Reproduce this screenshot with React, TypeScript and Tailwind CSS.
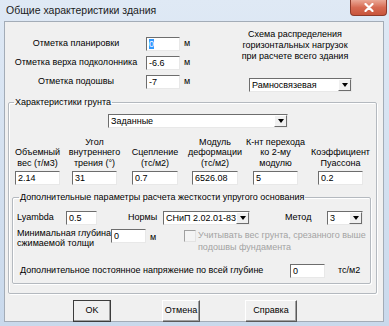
import React from "react";

function Field({ w, value, sel }: { w: string; value: string; sel?: boolean }) {
  return (
    <div
      className={`${w} h-[14px] shrink-0 bg-white border border-t-[#6d6d6d] border-l-[#6d6d6d] border-r-[#e8e8e8] border-b-[#e8e8e8] pl-[2px] leading-[12px] whitespace-nowrap overflow-hidden`}
    >
      {sel ? <span className="bg-[#3399ff] text-white">{value}</span> : value}
    </div>
  );
}

function Combo({ w, value }: { w: string; value: string }) {
  return (
    <div
      className={`${w} h-[14px] shrink-0 flex bg-white border border-t-[#6d6d6d] border-l-[#6d6d6d] border-r-[#e8e8e8] border-b-[#e8e8e8]`}
    >
      <div className="flex-1 pl-[2px] leading-[12px] whitespace-nowrap overflow-hidden">{value}</div>
      <div className="w-[13px] h-[12px] shrink-0 bg-[#f0f0f0] border border-t-white border-l-white border-r-[#6d6d6d] border-b-[#6d6d6d] flex items-center justify-center">
        <div className="w-0 h-0 border-l-[3px] border-r-[3px] border-t-[4px] border-l-transparent border-r-transparent border-t-black" />
      </div>
    </div>
  );
}

function Btn({ w, label, def }: { w: string; label: string; def?: boolean }) {
  return (
    <div
      className={`${w} h-[22px] shrink-0 flex items-center justify-center bg-[#f0f0f0] border ${
        def ? "border-[#3c3c3c]" : "border-t-white border-l-white border-r-[#5a5a5a] border-b-[#5a5a5a]"
      } shadow-[inset_-1px_-1px_0_#a0a0a0]`}
    >
      {label}
    </div>
  );
}

export default function App() {
  const cols = [
    { w: "w-[57px]", iw: "w-[45px]", lines: ["Объемный", "вес (т/м3)"], v: "2.14" },
    { w: "w-[57px]", iw: "w-[45px]", lines: ["Угол", "внутреннего", "трения (°)"], v: "31" },
    { w: "w-[64px]", iw: "w-[46px]", lines: ["Сцепление", "(тс/м2)"], v: "0.7" },
    { w: "w-[56px]", iw: "w-[46px]", lines: ["Модуль", "деформации", "(тс/м2)"], v: "6526.08" },
    { w: "w-[65px]", iw: "w-[45px]", lines: ["К-нт перехода", "ко 2-му", "модулю"], v: "5" },
    { w: "w-[65px]", iw: "w-[45px]", lines: ["Коэффициент", "Пуассона"], v: "0.2" },
  ];

  return (
    <div
      className="w-[389px] h-[326px] overflow-hidden bg-gradient-to-b from-[#dfe9f5] to-[#c9d9ec] text-[9px] text-black"
      style={{ fontFamily: '"Liberation Sans", Arial, sans-serif' }}
    >
      {/* title bar */}
      <div className="h-[21px] flex items-start">
        <div className="pl-[6px] pt-[3px] text-[10.5px] text-[#1b1b1b] flex-1">Общие характеристики здания</div>
        <div className="mr-[2px] w-[37px] h-[16px] rounded-b-[4px] border border-t-0 border-[#8d3b2b] bg-gradient-to-b from-[#eaa896] via-[#d66a52] to-[#c8553c] flex items-center justify-center">
          <svg width="10" height="9" viewBox="0 0 10 9">
            <path d="M1.5 1 L8.5 8 M8.5 1 L1.5 8" stroke="#fff" strokeWidth="2.2" strokeLinecap="round" />
          </svg>
        </div>
      </div>

      {/* client */}
      <div className="ml-[4px] w-[380px] h-[301px] bg-[#f0f0f0] border border-[#a3acb7] flex flex-col">
        {/* top section */}
        <div className="h-[74px] flex shrink-0">
          <div className="w-[205px] pt-[12px] flex flex-col">
            {[
              ["Отметка планировки", "0", true],
              ["Отметка верха подколонника", "-6.6", false],
              ["Отметка подошвы", "-7", false],
            ].map(([l, v, s]) => (
              <div key={l as string} className="h-[19px] flex items-center pl-[4px]">
                <div className="w-[134px] text-center whitespace-nowrap">{l as string}</div>
                <div className="ml-[3px]">
                  <Field w="w-[34px]" value={v as string} sel={s as boolean} />
                </div>
                <div className="ml-[4px]">м</div>
              </div>
            ))}
          </div>
          <div className="w-[170px] pt-[7px] flex flex-col">
            <div className="text-center leading-[11px] whitespace-nowrap">
              <div>Схема распределения</div>
              <div>горизонтальных нагрузок</div>
              <div>при расчете всего здания</div>
            </div>
            <div className="mt-[16px] ml-[39px]">
              <Combo w="w-[103px]" value="Рамносвязевая" />
            </div>
          </div>
        </div>

        {/* soil */}
        <fieldset className="ml-[3px] w-[369px] h-[198px] shrink-0 border border-[#b4b9bf] rounded-[2px] shadow-[1px_1px_0_#fff,inset_1px_1px_0_#fff]">
          <legend className="ml-[5px] px-[1px] leading-[12px]">Характеристики грунта</legend>
          <div className="mt-[6px] ml-[99px]">
            <Combo w="w-[180px]" value="Заданные" />
          </div>
          <div className="mt-[4px] flex">
            {cols.map((c) => (
              <div key={c.v} className={`${c.w} flex flex-col items-center`}>
                <div className="h-[36px] flex flex-col justify-end items-center leading-[10.5px] whitespace-nowrap">
                  {c.lines.map((t) => (
                    <div key={t}>{t}</div>
                  ))}
                </div>
                <div className="mt-[3px]">
                  <Field w={c.iw} value={c.v} />
                </div>
              </div>
            ))}
          </div>

          {/* extra params */}
          <fieldset className="mt-[6px] ml-[3px] w-[359px] h-[93px] border border-[#b4b9bf] rounded-[2px] shadow-[1px_1px_0_#fff,inset_1px_1px_0_#fff]">
            <legend className="ml-[6px] px-[1px] leading-[12px] whitespace-nowrap">
              Дополнительные параметры расчета жесткости упругого основания
            </legend>
            <div className="mt-[8px] h-[14px] flex items-center">
              <div className="ml-[4px] w-[49px]">Lyambda</div>
              <Field w="w-[31px]" value="0.5" />
              <div className="ml-[31px] w-[35px]">Нормы</div>
              <Combo w="w-[87px]" value="СНиП 2.02.01-83" />
              <div className="ml-[35px] w-[42px]">Метод</div>
              <Combo w="w-[36px]" value="3" />
            </div>
            <div className="mt-[3px] flex items-start">
              <div className="ml-[4px] w-[94px] leading-[10px] whitespace-nowrap">
                <div>Минимальная глубина</div>
                <div>сжимаемой толщи</div>
              </div>
              <div className="mt-[1px]">
                <Field w="w-[35px]" value="0" />
              </div>
              <div className="mt-[3px] ml-[4px] w-[34px]">м</div>
              <div className="mt-[2px] w-[12px] h-[12px] shrink-0 border border-t-[#a0a0a0] border-l-[#a0a0a0] border-r-[#e3e3e3] border-b-[#e3e3e3] bg-[#f4f4f4]" />
              <div className="ml-[2px] mt-[1px] leading-[12px] text-[#a3a3a3] whitespace-nowrap">
                <div>Учитывать вес грунта, срезанного выше</div>
                <div>подошвы фундамента</div>
              </div>
            </div>
            <div className="mt-[10px] h-[15px] flex items-center">
              <div className="ml-[7px] w-[270px] whitespace-nowrap">
                Дополнительное постоянное напряжение по всей глубине
              </div>
              <Field w="w-[35px]" value="0" />
              <div className="ml-[13px]">тс/м2</div>
            </div>
          </fieldset>
        </fieldset>

        {/* buttons */}
        <div className="mt-[6px] flex">
          <div className="ml-[68px]">
            <Btn w="w-[38px]" label="OK" def />
          </div>
          <div className="ml-[51px]">
            <Btn w="w-[38px]" label="Отмена" />
          </div>
          <div className="ml-[45px]">
            <Btn w="w-[52px]" label="Справка" />
          </div>
        </div>
      </div>
    </div>
  );
}
